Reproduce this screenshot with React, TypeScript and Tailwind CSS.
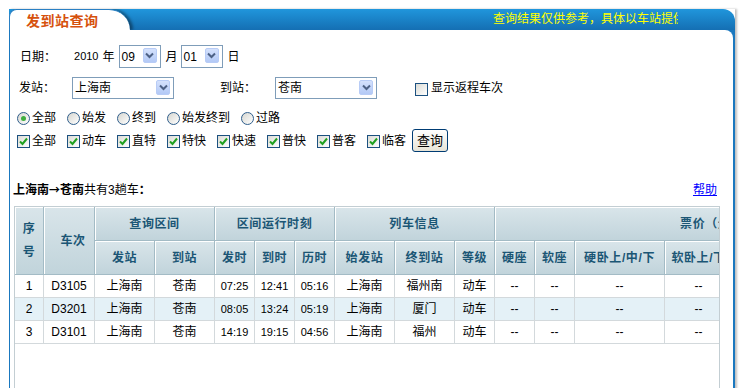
import React from "react";

const FONT = "font-['Liberation_Sans','Noto_Sans_CJK_SC',sans-serif]";

function Chevron() {
  return (
    <svg width="9" height="7" viewBox="0 0 9 7">
      <path d="M1 1.5 L4.5 5 L8 1.5" fill="none" stroke="#4d6185" strokeWidth="2" />
    </svg>
  );
}

function Select({ w, h, value, top }: { w: string; h: string; value: string; top?: boolean }) {
  return (
    <div className={`relative ${w} ${h} border border-[#7f9db9] bg-white flex ${top ? "items-start pt-[1px]" : "items-center"} pl-[2px] text-[12px] text-black`}>
      <span>{value}</span>
      <div className="absolute right-[3px] top-[2px] w-[14px] h-[15px] rounded-[2px] border border-[#b8ccf6] bg-gradient-to-b from-[#d4e1fc] to-[#b3c9f6] flex items-center justify-center">
        <Chevron />
      </div>
    </div>
  );
}

function Check({ checked }: { checked: boolean }) {
  return (
    <div className="w-[13px] h-[13px] border border-[#1c5180] bg-gradient-to-br from-[#dcdcd6] to-[#ffffff] flex items-center justify-center shrink-0">
      {checked && (
        <svg width="9" height="9" viewBox="0 0 9 9">
          <path d="M1 4.5 L3.5 7 L8 1.5" fill="none" stroke="#21a121" strokeWidth="2" />
        </svg>
      )}
    </div>
  );
}

function Radio({ checked }: { checked: boolean }) {
  return (
    <div className="w-[13px] h-[13px] rounded-full border border-[#2f5e8c] bg-gradient-to-br from-[#d6d6d0] to-[#ffffff] flex items-center justify-center shrink-0">
      {checked && <div className="w-[5px] h-[5px] rounded-full bg-[#3fae3f]" />}
    </div>
  );
}

const cols = [29, 51, 60, 60, 40, 40, 40, 60, 60, 40, 40, 40, 90, 68, 116, 40, 40];

const rows = [
  ["1", "D3105", "上海南", "苍南", "07:25", "12:41", "05:16", "上海南", "福州南", "动车"],
  ["2", "D3201", "上海南", "苍南", "08:05", "13:24", "05:19", "上海南", "厦门", "动车"],
  ["3", "D3101", "上海南", "苍南", "14:19", "19:15", "04:56", "上海南", "福州", "动车"],
];

const th =
  "border-r border-b border-[#a3bbc5] bg-gradient-to-b from-[#d9e5ea] to-[#c1d4db] text-[#1b5675] font-bold text-[12px] tracking-[0.6px] shadow-[inset_1px_1px_0_#ffffff] text-center p-0 whitespace-nowrap overflow-hidden";
const td = "border-r border-b border-[#d3d9dc] text-center text-black p-0 whitespace-nowrap h-[23px]";

export default function App() {
  return (
    <div className={`w-[746px] h-[388px] overflow-hidden bg-white ${FONT} text-[12px] text-black`}>
      <div className="ml-[9px] mt-[9px] w-[726px] shadow-[2px_0_2px_rgba(0,0,0,0.25)]">
        {/* header bar */}
        <div className="h-[21px] rounded-tr-[12px] bg-gradient-to-b from-[#2096dc] to-[#156fb3] flex items-stretch overflow-hidden">
          <div className="w-[121px] h-[21px] bg-white rounded-tl-[8px] rounded-tr-[22px] border-l border-t border-[#2a80c4] shadow-[3px_0_3px_rgba(0,0,0,0.4)] pl-[16px] pt-[2px]">
            <span className="text-[14px] leading-[18px] font-bold tracking-[0.5px] text-[#d6510d]">发到站查询</span>
          </div>
          <div className="ml-auto mr-[57px] w-[185px] overflow-hidden whitespace-nowrap text-[#ffff00] text-[12px] leading-[21px]">
            查询结果仅供参考，具体以车站提供的信息为准。
          </div>
        </div>
        {/* body */}
        <div className="bg-[#1a78bf] pl-[1px] pr-[2px]">
          <div className="bg-white rounded-tr-[8px] h-[370px] flex flex-col">
            {/* row 1 */}
            <div className="mt-[15px] h-[23px] flex items-center pl-[10px]">
              <span>日期：</span>
              <span className="ml-[18px] text-[11px]">2010</span>
              <span className="ml-[4px]">年</span>
              <div className="ml-[4px]">
                <Select w="w-[42px]" h="h-[23px]" value="09" />
              </div>
              <span className="ml-[5px]">月</span>
              <div className="ml-[3px]">
                <Select w="w-[42px]" h="h-[23px]" value="01" />
              </div>
              <span className="ml-[5px]">日</span>
            </div>
            {/* row 2 */}
            <div className="mt-[9px] h-[22px] flex items-center pl-[9px]">
              <span>发站：</span>
              <div className="ml-[17px]">
                <Select w="w-[102px]" h="h-[22px]" value="上海南" top />
              </div>
              <span className="ml-[46px]">到站：</span>
              <div className="ml-[19px]">
                <Select w="w-[102px]" h="h-[22px]" value="苍南" top />
              </div>
              <div className="ml-[38px] mt-[3px]">
                <Check checked={false} />
              </div>
              <span className="ml-[3px]">显示返程车次</span>
            </div>
            {/* row 3 radios */}
            <div className="mt-[11px] h-[16px] flex items-center pl-[7px]">
              {["全部", "始发", "终到", "始发终到", "过路"].map((t, i) => (
                <div key={t} className="flex items-center mr-[11px]">
                  <Radio checked={i === 0} />
                  <span className="ml-[2px]">{t}</span>
                </div>
              ))}
            </div>
            {/* row 4 checkboxes */}
            <div className="mt-[3px] h-[23px] flex items-center pl-[7px]">
              {["全部", "动车", "直特", "特快", "快速", "普快", "普客", "临客"].map((t, i) => (
                <div key={t + i} className={`flex items-center ${i < 7 ? "mr-[11px]" : "mr-[6px]"}`}>
                  <div className="mt-[1px]">
                    <Check checked />
                  </div>
                  <span className="ml-[2px]">{t}</span>
                </div>
              ))}
              <button className="w-[36px] h-[23px] rounded-[3px] border border-[#003c74] bg-gradient-to-b from-[#ffffff] to-[#e6e3d6] text-[13px] text-black flex items-center justify-center">
                查询
              </button>
            </div>
            {/* summary */}
            <div className="mt-[30px] h-[16px] flex items-center justify-between pl-[3px] pr-[16px]">
              <div>
                <span className="font-bold">上海南</span>
                <span className="font-bold font-['Noto_Sans_CJK_SC',sans-serif] text-[11px]">→</span>
                <span className="font-bold">苍南</span>
                <span>共有3趟车</span>
                <span className="font-bold">：</span>
              </div>
              <a className="text-[#0000ff] underline">帮助</a>
            </div>
            {/* table */}
            <div className="mt-[8px] ml-[4px] w-[706px] flex-1 border border-[#c3ced3] overflow-hidden">
              <table className="table-fixed border-separate border-spacing-0" style={{ width: cols.reduce((a, b) => a + b, 0) }}>
                <colgroup>
                  {cols.map((c, i) => (
                    <col key={i} style={{ width: c }} />
                  ))}
                </colgroup>
                <thead>
                  <tr className="h-[34px]">
                    <th rowSpan={2} className={`${th} leading-[23px]`}>
                      序<br />号
                    </th>
                    <th rowSpan={2} className={`${th} pl-[8px]`}>车次</th>
                    <th colSpan={2} className={th}>查询区间</th>
                    <th colSpan={3} className={th}>区间运行时刻</th>
                    <th colSpan={3} className={th}>列车信息</th>
                    <th colSpan={7} className={th}>票价（元）</th>
                  </tr>
                  <tr className="h-[34px]">
                    {["发站", "到站", "发时", "到时", "历时", "始发站", "终到站", "等级", "硬座", "软座", "硬卧上/中/下", "软卧上/下", "高级软卧上/下", "一等座", "二等座"].map((t) => (
                      <th key={t} className={th}>{t}</th>
                    ))}
                  </tr>
                </thead>
                <tbody>
                  {rows.map((r, ri) => (
                    <tr key={ri} className={ri === 1 ? "bg-[#e4f1f7]" : "bg-white"}>
                      {r.map((c, ci) => (
                        <td key={ci} className={`${td} ${ci >= 4 && ci <= 6 ? "text-[11px]" : "text-[12px]"}`}>
                          {c}
                        </td>
                      ))}
                      {[0, 1, 2, 3, 4, 5, 6].map((k) => (
                        <td key={"p" + k} className={`${td} text-[12px]`}>--</td>
                      ))}
                    </tr>
                  ))}
                </tbody>
              </table>
            </div>
          </div>
        </div>
      </div>
    </div>
  );
}
